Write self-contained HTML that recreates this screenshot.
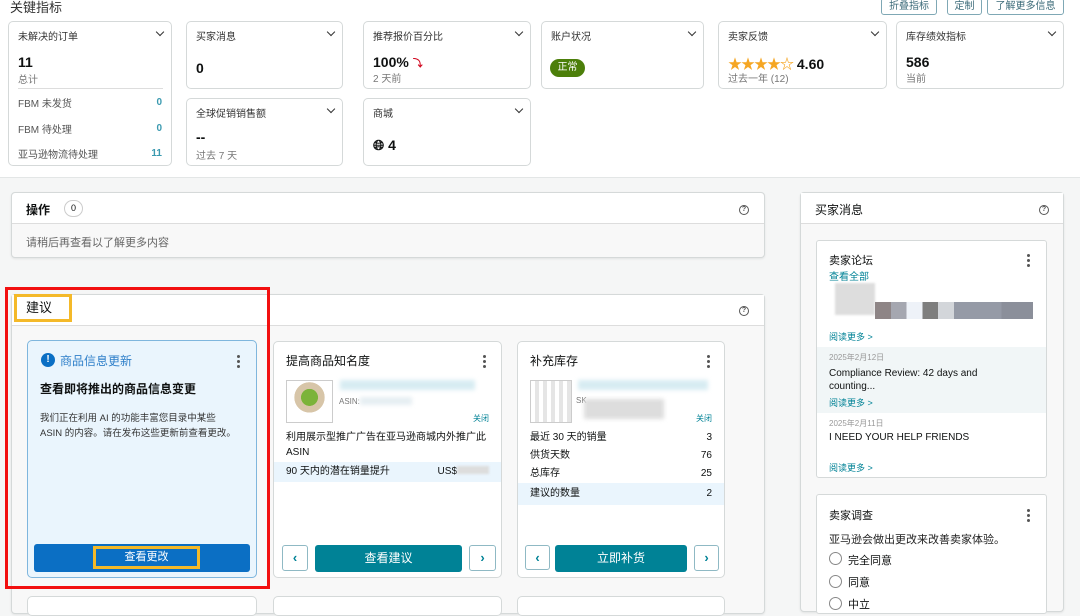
<!DOCTYPE html>
<html><head><meta charset="utf-8"><style>
*{box-sizing:border-box;margin:0;padding:0}
body{width:1080px;height:602px;overflow:hidden;background:#f5f6f6;font-family:"Liberation Sans","Noto Sans CJK SC",sans-serif;color:#0f1111;position:relative;font-size:11px}
.a{position:absolute}
.top{left:0;top:0;width:1080px;height:178px;background:#fff;border-bottom:1px solid #e3e6e6}
.card{position:absolute;background:#fff;border:1px solid #d5d9d9;border-radius:5px}
.mc .t{position:absolute;left:9px;top:6px;font-size:10px;color:#333}
.chev{position:absolute;right:8px;top:7px;width:6px;height:6px;border-right:1.5px solid #333;border-bottom:1.5px solid #333;transform:rotate(45deg)}
.big{position:absolute;left:9px;font-size:14px;font-weight:bold;color:#0f1111}
.sub{position:absolute;left:9px;font-size:10px;color:#777}
.btn{position:absolute;border:1px solid #7fa8b5;border-radius:3px;background:#fff;font-size:10px;color:#3b6a78;text-align:center;line-height:15px}
.panel{position:absolute;background:#fff;border:1px solid #d5d9d9;border-radius:4px;box-shadow:0 1px 2px rgba(0,0,0,.08)}
.help{position:absolute;width:10px;height:10px;border:1.3px solid #555;border-radius:50%;font-size:7px;line-height:8px;text-align:center;color:#555;font-weight:bold}
.dots{position:absolute;width:3px}
.dots i{display:block;width:3px;height:3px;background:#555;border-radius:50%;margin-bottom:2px}
.tbtn{position:absolute;background:#008296;color:#fff;border-radius:3px;text-align:center;font-size:12px;line-height:27px}
.arr{position:absolute;border:1px solid #8fb9c4;border-radius:3px;background:#fff;text-align:center;color:#008296;font-weight:bold;font-size:13px;line-height:24px}
.row{position:absolute;left:0;right:0;height:20px;font-size:10px;line-height:20px;padding:0 13px}
.row span{float:right}
.link{color:#008296}
.blur{position:absolute;background:#e6eef2;filter:blur(2px)}
</style></head><body>
<div class="a top"></div>
<div class="a" style="left:10px;top:-3px;font-size:13px;color:#333">关键指标</div>
<div class="btn" style="left:881px;top:-2px;width:56px;height:17px">折叠指标</div>
<div class="btn" style="left:947px;top:-2px;width:35px;height:17px">定制</div>
<div class="btn" style="left:987px;top:-2px;width:77px;height:17px">了解更多信息</div>

<div class="card mc" style="left:8px;top:21px;width:164px;height:145px"><div class="t">未解决的订单</div><i class="chev"></i>
<div class="big" style="top:32px">11</div><div class="sub" style="top:49px">总计</div>
<div class="a" style="left:9px;right:8px;top:66px;border-top:1px solid #ddd"></div>
<div class="a" style="left:9px;top:73px;font-size:10px;color:#555">FBM 未发货</div><div class="a" style="right:9px;top:75px;font-size:10px;color:#3b9ab0;font-weight:bold">0</div>
<div class="a" style="left:9px;top:99px;font-size:10px;color:#555">FBM 待处理</div><div class="a" style="right:9px;top:101px;font-size:10px;color:#3b9ab0;font-weight:bold">0</div>
<div class="a" style="left:9px;top:124px;font-size:10px;color:#555">亚马逊物流待处理</div><div class="a" style="right:9px;top:126px;font-size:10px;color:#3b9ab0;font-weight:bold">11</div>
</div>
<div class="card mc" style="left:186px;top:21px;width:157px;height:68px"><div class="t">买家消息</div><i class="chev"></i><div class="big" style="top:38px">0</div></div>
<div class="card mc" style="left:363px;top:21px;width:168px;height:68px"><div class="t">推荐报价百分比</div><i class="chev"></i><div class="big" style="top:32px">100% <span style="color:#d0021b;font-size:10px">⤵</span></div><div class="sub" style="top:48px">2 天前</div></div>
<div class="card mc" style="left:541px;top:21px;width:163px;height:68px"><div class="t">账户状况</div><i class="chev"></i><div class="a" style="left:8px;top:37px;width:35px;height:18px;background:#4c7f0a;border-radius:9px;color:#fff;font-size:10px;text-align:center;line-height:18px">正常</div></div>
<div class="card mc" style="left:718px;top:21px;width:169px;height:68px"><div class="t">卖家反馈</div><i class="chev"></i><div class="big" style="top:32px"><span style="color:#f5a623;font-size:14px;letter-spacing:-1px">★★★★☆</span> 4.60</div><div class="sub" style="top:48px">过去一年 (12)</div></div>
<div class="card mc" style="left:896px;top:21px;width:168px;height:68px"><div class="t">库存绩效指标</div><i class="chev"></i><div class="big" style="top:32px">586</div><div class="sub" style="top:48px">当前</div></div>
<div class="card mc" style="left:186px;top:98px;width:157px;height:68px"><div class="t">全球促销销售额</div><i class="chev"></i><div class="big" style="top:30px">--</div><div class="sub" style="top:48px">过去 7 天</div></div>
<div class="card mc" style="left:363px;top:98px;width:168px;height:68px"><div class="t">商城</div><i class="chev"></i><div class="big" style="top:38px">🌐︎ 4</div></div>

<div class="panel" style="left:11px;top:192px;width:754px;height:66px;background:#f8f8f8">
<div class="a" style="left:0;top:0;right:0;height:31px;background:#fff;border-bottom:1px solid #ddd;border-radius:4px 4px 0 0"></div>
<div class="a" style="left:14px;top:8px;font-size:12px;font-weight:bold">操作</div>
<div class="a" style="left:52px;top:7px;width:19px;height:17px;border:1px solid #ccc;border-radius:9px;font-size:9px;text-align:center;line-height:15px">0</div>
<div class="help" style="right:15px;top:12px">?</div>
<div class="a" style="left:14px;top:41px;font-size:11px;color:#666">请稍后再查看以了解更多内容</div>
</div>

<div class="panel" style="left:11px;top:294px;width:754px;height:320px;background:#f8f8f8">
<div class="a" style="left:0;top:0;right:0;height:31px;background:#fff;border-bottom:1px solid #ddd"></div>
<div class="help" style="right:15px;top:11px">?</div>
</div>
<div class="a" style="left:14px;top:294px;width:58px;height:28px;border:3px solid #f4b929;font-size:13px;line-height:22px;padding-left:9px">建议</div>

<div class="card" style="left:27px;top:340px;width:230px;height:238px;background:#eaf5fd;border-color:#7fb6dd">
<div class="a" style="left:13px;top:12px;width:14px;height:14px;border-radius:50%;background:#0b6fc4;color:#fff;font-size:10px;text-align:center;line-height:14px;font-weight:bold">!</div>
<div class="a" style="left:32px;top:11px;font-size:12px;color:#2e7fc9">商品信息更新</div>
<div class="dots" style="right:16px;top:14px"><i></i><i></i><i></i></div>
<div class="a" style="left:12px;top:39px;font-size:12px;font-weight:bold">查看即将推出的商品信息变更</div>
<div class="a" style="left:12px;top:70px;font-size:9.5px;color:#333;line-height:15px;width:215px;white-space:nowrap">我们正在利用 AI 的功能丰富您目录中某些<br>ASIN 的内容。请在发布这些更新前查看更改。</div>
<div class="a" style="left:6px;top:203px;width:216px;height:28px;background:#0b6fc4;border-radius:3px"></div>
<div class="a" style="left:65px;top:205px;width:107px;height:23px;border:3px solid #f4b929;color:#fff;font-size:11px;text-align:center;line-height:17px">查看更改</div>
</div>

<div class="card" style="left:273px;top:341px;width:229px;height:237px">
<div class="a" style="left:12px;top:10px;font-size:12px">提高商品知名度</div>
<div class="dots" style="right:15px;top:13px"><i></i><i></i><i></i></div>
<div class="a" style="left:12px;top:38px;width:47px;height:43px;border:1px solid #ccc;background:radial-gradient(circle at 50% 40%,#7bb33a 0 25%,#d7c5a8 26% 45%,#fff 46%)"></div>
<div class="blur" style="left:66px;top:38px;width:135px;height:10px;background:#d7ecf2"></div>
<div class="a" style="left:65px;top:55px;font-size:8px;color:#777">ASIN:</div><div class="blur" style="left:86px;top:55px;width:52px;height:8px"></div>
<div class="a" style="right:12px;top:71px;font-size:8px;color:#008296">关闭</div>
<div class="a" style="left:12px;top:88px;font-size:10px;line-height:15px;width:205px">利用展示型推广广告在亚马逊商城内外推广此 ASIN</div>
<div class="row" style="top:120px;background:#eaf5fd;padding:0 12px">90 天内的潜在销量提升<span>US$<i style="display:inline-block;width:32px;height:8px;background:#ddd;filter:blur(1px)"></i></span></div>
<div class="arr" style="left:8px;top:203px;width:26px;height:26px">‹</div>
<div class="tbtn" style="left:41px;top:203px;width:147px;height:27px">查看建议</div>
<div class="arr" style="left:195px;top:203px;width:27px;height:26px">›</div>
</div>

<div class="card" style="left:517px;top:341px;width:208px;height:237px">
<div class="a" style="left:12px;top:10px;font-size:12px">补充库存</div>
<div class="dots" style="right:14px;top:13px"><i></i><i></i><i></i></div>
<div class="a" style="left:12px;top:38px;width:42px;height:43px;border:1px solid #ccc;background:repeating-linear-gradient(90deg,#fff 0 4px,#e5e5e5 4px 8px)"></div>
<div class="blur" style="left:60px;top:38px;width:130px;height:10px;background:#d7ecf2"></div>
<div class="a" style="left:58px;top:54px;font-size:8px;color:#777">SK</div>
<div class="blur" style="left:66px;top:57px;width:80px;height:20px;background:#ddd"></div>
<div class="a" style="right:12px;top:71px;font-size:8px;color:#008296">关闭</div>
<div class="row" style="top:86px;padding:0 12px">最近 30 天的销量<span>3</span></div>
<div class="row" style="top:104px;padding:0 12px">供货天数<span>76</span></div>
<div class="row" style="top:122px;padding:0 12px">总库存<span>25</span></div>
<div class="row" style="top:141px;background:#eaf5fd;height:22px;line-height:22px;padding:0 12px">建议的数量<span>2</span></div>
<div class="arr" style="left:7px;top:203px;width:25px;height:25px">‹</div>
<div class="tbtn" style="left:37px;top:203px;width:132px;height:27px">立即补货</div>
<div class="arr" style="left:176px;top:203px;width:25px;height:26px">›</div>
</div>
<div class="card" style="left:27px;top:596px;width:230px;height:20px"></div>
<div class="card" style="left:273px;top:596px;width:229px;height:20px"></div>
<div class="card" style="left:517px;top:596px;width:208px;height:20px"></div>

<div class="a" style="left:5px;top:287px;width:265px;height:302px;border:3px solid #f21010"></div>

<div class="panel" style="left:800px;top:192px;width:264px;height:420px;background:#f8f8f8">
<div class="a" style="left:0;top:0;right:0;height:31px;background:#fff;border-bottom:1px solid #ddd"></div>
<div class="a" style="left:14px;top:8px;font-size:12px">买家消息</div>
<div class="help" style="right:14px;top:12px">?</div>
</div>
<div class="card" style="left:816px;top:240px;width:231px;height:238px;border-radius:3px">
<div class="a" style="left:12px;top:11px;font-size:11px">卖家论坛</div>
<div class="a link" style="left:12px;top:27px;font-size:10px">查看全部</div>
<div class="dots" style="right:16px;top:13px"><i></i><i></i><i></i></div>
<div class="a" style="left:18px;top:42px;width:40px;height:32px;background:#ddd;filter:blur(1px)"></div>
<div class="a" style="left:58px;top:61px;width:158px;height:17px;background:linear-gradient(90deg,#8e8586 0 10%,#a5a7b0 10% 20%,#eef2f8 20% 30%,#7e7e7e 30% 40%,#d3d6da 40% 50%,#959aa6 50% 80%,#8b8f9a 80%)"></div>
<div class="a link" style="left:12px;top:89px;font-size:9px">阅读更多 &gt;</div>
<div class="a" style="left:0;right:0;top:106px;height:66px;background:#f1f6f7"></div>
<div class="a" style="left:12px;top:111px;font-size:8px;color:#999">2025年2月12日</div>
<div class="a" style="left:12px;top:126px;font-size:10px;line-height:13px;width:170px">Compliance Review: 42 days and counting...</div>
<div class="a link" style="left:12px;top:155px;font-size:9px">阅读更多 &gt;</div>
<div class="a" style="left:12px;top:177px;font-size:8px;color:#999">2025年2月11日</div>
<div class="a" style="left:12px;top:191px;font-size:10px">I NEED YOUR HELP FRIENDS</div>
<div class="a link" style="left:12px;top:220px;font-size:9px">阅读更多 &gt;</div>
</div>
<div class="card" style="left:816px;top:494px;width:231px;height:120px;border-radius:3px">
<div class="a" style="left:12px;top:12px;font-size:11px">卖家调查</div>
<div class="dots" style="right:16px;top:14px"><i></i><i></i><i></i></div>
<div class="a" style="left:12px;top:36px;font-size:11px;color:#222">亚马逊会做出更改来改善卖家体验。</div>
<div class="a" style="left:12px;top:57px;width:13px;height:13px;border:1px solid #888;border-radius:50%"></div><div class="a" style="left:31px;top:57px;font-size:11px">完全同意</div>
<div class="a" style="left:12px;top:80px;width:13px;height:13px;border:1px solid #888;border-radius:50%"></div><div class="a" style="left:31px;top:79px;font-size:11px">同意</div>
<div class="a" style="left:12px;top:102px;width:13px;height:13px;border:1px solid #888;border-radius:50%"></div><div class="a" style="left:31px;top:101px;font-size:11px">中立</div>
</div>
</body></html>
